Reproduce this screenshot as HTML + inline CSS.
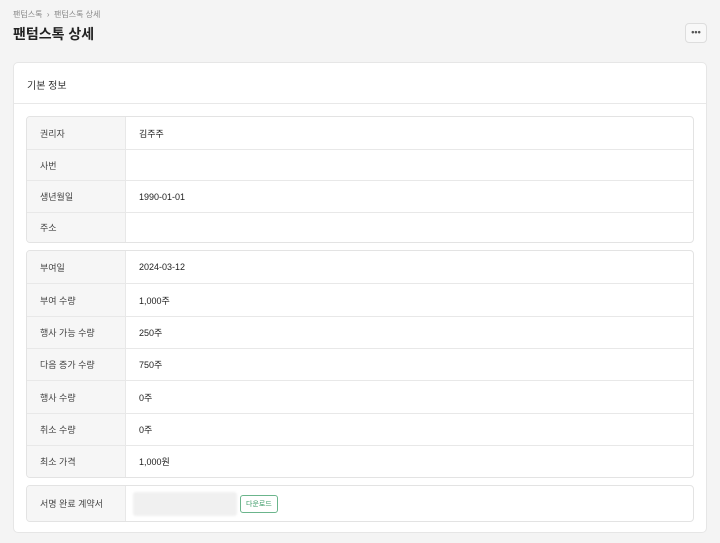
<!DOCTYPE html>
<html><head><meta charset="utf-8"><style>
*{box-sizing:border-box;margin:0;padding:0}
body{width:720px;height:543px;background:#f4f4f4;font-family:"Liberation Sans","Noto Sans CJK KR",sans-serif;color:#222;position:relative;overflow:hidden}
.bc{position:absolute;left:13px;top:9px;font-size:8px;color:#888}
h1{position:absolute;left:13px;top:24px;font-size:14px;font-weight:700;color:#222}
.more{position:absolute;left:685px;top:23px;width:22px;height:20px;border:1px solid #ddd;border-radius:4px;background:#f8f8f8;text-align:center;font-size:9px;line-height:16px;color:#555;font-weight:700}
.card{position:absolute;left:13px;top:62px;width:694px;height:471px;background:#fff;border:1px solid #e6e6e6;border-radius:5px}
.ch{height:41px;border-bottom:1px solid #e8e8e8;padding:14px 13px;font-size:10px;color:#333}
.g{position:absolute;left:12px;width:668px;border:1px solid #e3e3e3;border-radius:4px;overflow:hidden;background:#fff}
.r{display:flex;border-top:1px solid #e8e8e8;font-size:9px}
.r:first-child{border-top:none}
.l{width:99px;background:#f6f6f6;border-right:1px solid #e8e8e8;padding-left:13px;display:flex;align-items:center;color:#444}
.v{padding-left:13px;display:flex;align-items:center;color:#222}
.blur{width:104px;height:24px;background:#f0f0f0;border-radius:3px;filter:blur(1px)}
.btn{margin-left:3px;border:1px solid #6bb58c;color:#3a9a66;font-size:7px;padding:3px 5px;border-radius:3px}
</style></head><body>
<div class="bc">팬텀스톡 &nbsp;›&nbsp; 팬텀스톡 상세</div>
<h1>팬텀스톡 상세</h1>
<div class="more">•••</div>
<div class="card">
<div class="ch">기본 정보</div>
<div class="g" style="top:53px">
<div class="r" style="height:32px"><div class="l">권리자</div><div class="v">김주주</div></div>
<div class="r" style="height:31px"><div class="l">사번</div><div class="v"></div></div>
<div class="r" style="height:32px"><div class="l">생년월일</div><div class="v">1990-01-01</div></div>
<div class="r" style="height:30px"><div class="l">주소</div><div class="v"></div></div>
</div>
<div class="g" style="top:187px">
<div class="r" style="height:32px"><div class="l">부여일</div><div class="v">2024-03-12</div></div>
<div class="r" style="height:33px"><div class="l">부여 수량</div><div class="v">1,000주</div></div>
<div class="r" style="height:32px"><div class="l">행사 가능 수량</div><div class="v">250주</div></div>
<div class="r" style="height:32px"><div class="l">다음 증가 수량</div><div class="v">750주</div></div>
<div class="r" style="height:33px"><div class="l">행사 수량</div><div class="v">0주</div></div>
<div class="r" style="height:32px"><div class="l">취소 수량</div><div class="v">0주</div></div>
<div class="r" style="height:32px"><div class="l">최소 가격</div><div class="v">1,000원</div></div>
</div>
<div class="g" style="top:422px">
<div class="r" style="height:35px"><div class="l">서명 완료 계약서</div><div class="v" style="padding-left:7px"><div class="blur"></div><span class="btn">다운로드</span></div></div>
</div>
</div>
</body></html>
